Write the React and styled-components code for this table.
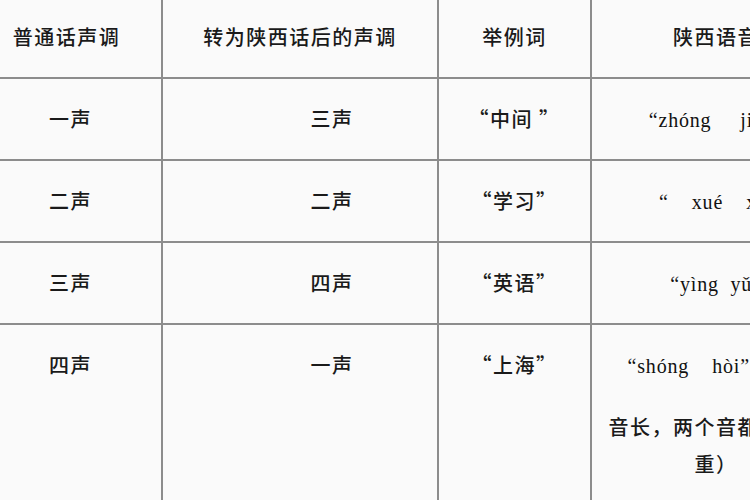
import React from 'react'
import styled, { createGlobalStyle } from 'styled-components'

const GlobalStyle = createGlobalStyle`
    html, body {
        margin: 0;
        padding: 0;
        background: #fafafa;
    }
`

const Frame = styled.div`
    width: 750px;
    height: 500px;
    overflow: hidden;
    background: #fafafa;
    font-family: "Noto Sans CJK SC", "Noto Sans", sans-serif;
    color: #1a1a1a;
`

const Table = styled.table`
    width: 841px;
    table-layout: fixed;
    border-collapse: collapse;
`

const HeadCell = styled.th`
    height: 72px;
    padding: 0 ${p => p.$padRight || 0}px 5px 0;
    border: 2px solid #8c8c8c;
    border-top: none;
    border-left: ${p => (p.$first ? 'none' : '2px solid #8c8c8c')};
    font-size: 20px;
    font-weight: 500;
    letter-spacing: 1.5px;
    text-align: center;
    vertical-align: middle;
`

const Cell = styled.td`
    height: ${p => p.$height || 59}px;
    padding: 21px ${p => p.$padRight || 0}px 0 ${p => p.$padLeft || 0}px;
    border: 2px solid #8c8c8c;
    border-left: ${p => (p.$first ? 'none' : '2px solid #8c8c8c')};
    border-bottom: ${p => (p.$last ? 'none' : '2px solid #8c8c8c')};
    font-size: 20px;
    font-weight: 500;
    line-height: 37px;
    letter-spacing: 1.5px;
    text-align: center;
    vertical-align: top;
    white-space: nowrap;
`

const Pinyin = styled.span`
    font-family: "Liberation Serif", serif;
    font-size: 20px;
    font-weight: normal;
    letter-spacing: 0.8px;
    white-space: pre;
    color: #111;
`

const Note = styled.div`
    margin-top: 23px;
    padding: 0 6px;
    white-space: normal;
    text-align: center;
`

const rows = [
    { tone: '一声', becomes: '三声', word: '“中间 ”', pinyin: '“zhóng     jiān”' },
    { tone: '二声', becomes: '二声', word: '“学习”', pinyin: '“    xué    xí”' },
    { tone: '三声', becomes: '四声', word: '“英语”', pinyin: '“yìng  yǔ”' },
]

const App = () => (
    <Frame>
        <GlobalStyle />
        <Table>
            <colgroup>
                <col style={{ width: 162 }} />
                <col style={{ width: 276 }} />
                <col style={{ width: 153 }} />
                <col style={{ width: 250 }} />
            </colgroup>
            <thead>
                <tr>
                    <HeadCell $first $padRight={28}>普通话声调</HeadCell>
                    <HeadCell>转为陕西话后的声调</HeadCell>
                    <HeadCell>举例词</HeadCell>
                    <HeadCell>陕西语音</HeadCell>
                </tr>
            </thead>
            <tbody>
                {rows.map(r => (
                    <tr key={r.tone}>
                        <Cell $first $padRight={20}>{r.tone}</Cell>
                        <Cell $padLeft={64}>{r.becomes}</Cell>
                        <Cell>{r.word}</Cell>
                        <Cell><Pinyin>{r.pinyin}</Pinyin></Cell>
                    </tr>
                ))}
                <tr>
                    <Cell $first $last $padRight={20} $height={200}>四声</Cell>
                    <Cell $last $padLeft={64}>一声</Cell>
                    <Cell $last>“上海”</Cell>
                    <Cell $last>
                        <Pinyin>“shóng    hòi”</Pinyin>（上字
                        <Note>音长，两个音都读得很重）</Note>
                    </Cell>
                </tr>
            </tbody>
        </Table>
    </Frame>
)

export default App
